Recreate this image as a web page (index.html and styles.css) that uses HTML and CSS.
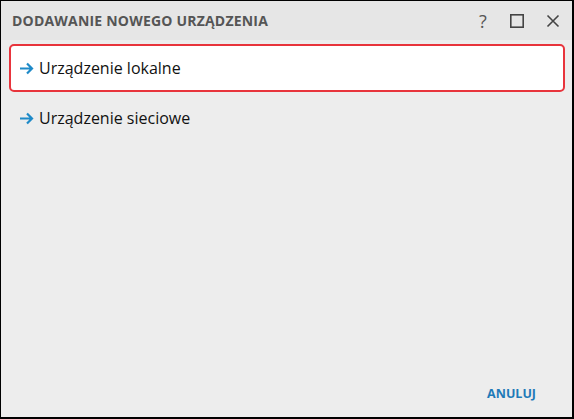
FILE: index.html
```html
<!DOCTYPE html>
<html>
<head>
<meta charset="utf-8">
<link rel="stylesheet" href="styles.css">
</head>
<body>
<div class="window">
  <div class="titlebar">
    <div class="title">DODAWANIE NOWEGO URZĄDZENIA</div>
    <div class="controls">
      <span class="ctl help">?</span>
      <span class="ctl max"><svg width="16" height="16" viewBox="0 0 16 16"><rect x="1.8" y="1.8" width="12.4" height="12.4" fill="none" stroke="#444" stroke-width="1.6"/></svg></span>
      <span class="ctl"><svg width="16" height="16" viewBox="0 0 16 16"><path d="M2.5 2.5L13.5 13.5M13.5 2.5L2.5 13.5" stroke="#444" stroke-width="1.6" fill="none"/></svg></span>
    </div>
  </div>
  <div class="content">
    <div class="item selected">
      <svg class="arrow" width="15" height="13" viewBox="0 0 15 13"><path d="M1 6.5H13M8 1.5L13 6.5L8 11.5" stroke="#1e8ac8" stroke-width="2.2" fill="none"/></svg>
      <span>Urządzenie lokalne</span>
    </div>
    <div class="item">
      <svg class="arrow" width="15" height="13" viewBox="0 0 15 13"><path d="M1 6.5H13M8 1.5L13 6.5L8 11.5" stroke="#1e8ac8" stroke-width="2.2" fill="none"/></svg>
      <span>Urządzenie sieciowe</span>
    </div>
  </div>
  <div class="footer">
    <span class="btn">ANULUJ</span>
  </div>
</div>
</body>
</html>
```
FILE: styles.css
```css
html, body { margin: 0; padding: 0; }
body { font-family: "Open Sans", "Noto Sans", sans-serif; }
.window {
  box-sizing: border-box;
  width: 574px;
  height: 419px;
  border-style: solid;
  border-color: #000;
  border-width: 1px 2px 2px 1px;
  background: #ededed;
  display: flex;
  flex-direction: column;
}
.titlebar {
  height: 39px;
  background: #e6e6e6;
  display: flex;
  align-items: center;
  justify-content: space-between;
  padding: 0 11px 0 11px;
}
.title {
  font-weight: 700;
  font-size: 14px;
  color: #555;
  letter-spacing: 0.2px;
}
.controls { display: flex; align-items: center; }
.ctl { width: 16px; height: 16px; display: flex; align-items: center; justify-content: center; color: #555; }
.help { font-size: 18px; font-weight: 400; margin-right: 18px; }
.max { margin-right: 20px; }
.content { flex: 1; padding: 4px 7px 0 8px; display: flex; flex-direction: column; }
.item {
  height: 44px;
  display: flex;
  align-items: center;
  padding-left: 8px;
  font-size: 16px;
  color: #111;
  border: 2px solid transparent;
  border-radius: 5px;
}
.item.selected { background: #fff; border-color: #e8343c; margin-bottom: 2px; }
.arrow { margin-right: 5px; }
.footer { height: 48px; display: flex; justify-content: flex-end; align-items: center; padding-right: 36px; }
.btn { color: #1e7ab8; font-weight: 700; font-size: 12.5px; }
```
